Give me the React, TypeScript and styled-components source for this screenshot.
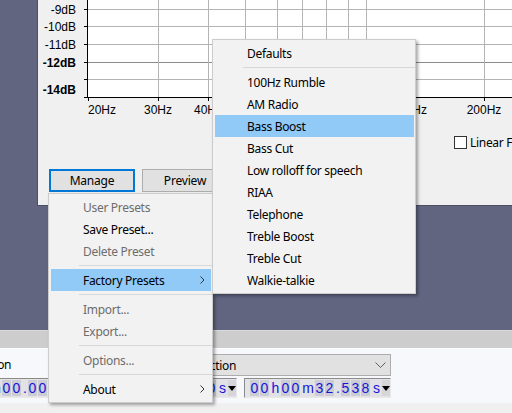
import React from "react";
import styled, { createGlobalStyle } from "styled-components";

const Global = createGlobalStyle`
  html, body { margin: 0; padding: 0; overflow: hidden; background: #626580; }
  #root { width: 512px; height: 413px; }
`;

const UI = `"Noto Sans", "Open Sans", sans-serif`;
const ARIAL = `"Liberation Sans", Arial, sans-serif`;

const Page = styled.div`
  position: relative;
  width: 512px;
  height: 413px;
  overflow: hidden;
  display: flex;
  flex-direction: column;
  background: #626580;
`;

const Desk = styled.div`
  height: 330px;
  flex: none;
  display: flex;
  align-items: flex-start;
  padding-left: 37px;
`;

const Dialog = styled.div`
  width: 474px;
  height: 205px;
  background: #f0f0f0;
  border-left: 1px solid #4d5064;
  border-bottom: 1px solid #4d5064;
  display: flex;
  flex-direction: column;
  overflow: hidden;
`;

const ChartSvg = styled.svg`
  display: block;
  flex: none;
`;

const OptionRow = styled.div`
  margin-top: 14px;
  padding-left: 416px;
  height: 13px;
  display: flex;
  align-items: center;
  gap: 3px;
  white-space: nowrap;
  font-family: ${UI};
  font-size: 12px;
  letter-spacing: -0.3px;
  color: #000;
`;

const CheckBox = styled.span`
  width: 11px;
  height: 11px;
  flex: none;
  border: 1px solid #333;
  background: #fff;
`;

const ButtonRow = styled.div`
  margin-top: 20px;
  padding-left: 11px;
  display: flex;
  gap: 7px;
`;

const Button = styled.div<{ $focused?: boolean }>`
  width: 86px;
  height: 23px;
  box-sizing: border-box;
  flex: none;
  display: flex;
  align-items: center;
  justify-content: center;
  background: #e1e1e1;
  border: ${(p) => (p.$focused ? "2px solid #0078d7" : "1px solid #adadad")};
  font-family: ${UI};
  font-size: 12px;
  letter-spacing: -0.2px;
  color: #000;
`;

const Dock = styled.div`
  flex: 1;
  display: flex;
  flex-direction: column;
  background: #f0f0f0;
`;

const DockGrip = styled.div`
  height: 17px;
  border-top: 1px solid #dadada;
  border-bottom: 1px solid #ffffff;
  background: #cdcdcd;
`;

const ToolPanel = styled.div`
  height: 44px;
  padding: 5px 0 5px 0;
  margin-left: -69px;
  background: #f7f8fb;
  display: flex;
  gap: 12px;
`;

const ToolGroup = styled.div`
  display: flex;
  flex-direction: column;
  gap: 2px;
`;

const ToolLabel = styled.div`
  height: 22px;
  line-height: 22px;
  padding-left: 3px;
  font-family: ${UI};
  font-size: 12px;
  letter-spacing: -0.3px;
  color: #000;
  white-space: nowrap;
`;

const Combo = styled.div`
  width: 301px;
  height: 22px;
  box-sizing: border-box;
  border: 1px solid #adadad;
  background: #e1e1e1;
  display: flex;
  align-items: center;
  justify-content: space-between;
  padding: 0 4px 0 8px;
  font-family: ${UI};
  font-size: 12px;
  letter-spacing: -0.3px;
  color: #000;
  white-space: nowrap;
`;

const TimeRow = styled.div`
  display: flex;
  gap: 7px;
`;

const TimeBox = styled.div`
  width: 147px;
  height: 20px;
  box-sizing: border-box;
  border: 1px solid;
  border-color: #8a8a8a #e8e8e8 #e8e8e8 #8a8a8a;
  background: #e4e4e6;
  display: flex;
  align-items: stretch;
  padding: 1px 0 1px 5px;
  font-family: ${ARIAL};
  font-size: 14px;
  color: #1515d8;
`;

const Digit = styled.span<{ $w: number; $sep?: boolean }>`
  width: ${(p) => p.$w}px;
  flex: none;
  display: flex;
  align-items: center;
  justify-content: center;
  overflow: hidden;
  background: ${(p) => (p.$sep ? "#e2e2e6" : "#cbccd4")};
  margin-right: ${(p) => (p.$sep ? 0 : 1)}px;
`;

const DropArrow = styled.span`
  width: 8px;
  flex: none;
  display: flex;
  align-items: center;
  justify-content: center;
  background: #d6d6d8;
  margin-left: auto;
`;

const Menu = styled.div<{ $x: number; $y: number; $w: number; $z: number }>`
  position: absolute;
  left: ${(p) => p.$x}px;
  top: ${(p) => p.$y}px;
  width: ${(p) => p.$w}px;
  box-sizing: border-box;
  z-index: ${(p) => p.$z};
  background: #f2f2f2;
  border: 1px solid #cccccc;
  padding: 2px 0 2px 0;
  box-shadow: 2px 2px 3px rgba(0, 0, 0, 0.35);
  font-family: ${UI};
  font-size: 12px;
  letter-spacing: -0.3px;
`;

const Item = styled.div<{ $disabled?: boolean; $active?: boolean }>`
  height: 22px;
  margin: 0 1px 0 2px;
  padding: 0 6px 0 32px;
  display: flex;
  align-items: center;
  justify-content: space-between;
  white-space: nowrap;
  background: ${(p) => (p.$active ? "#91c9f7" : "transparent")};
  color: ${(p) => (p.$disabled ? "#6d6d6d" : "#000")};
`;

const Separator = styled.div`
  height: 7px;
  display: flex;
  align-items: center;
  padding-left: 30px;
  &::after {
    content: "";
    flex: 1;
    height: 1px;
    background: #d7d7d7;
  }
`;

const SubArrow = () => (
  <svg width="5" height="8" viewBox="0 0 5 8">
    <polyline points="0.5,0.5 4,4 0.5,7.5" fill="none" stroke="#333" strokeWidth="1" />
  </svg>
);

const ChevronDown = () => (
  <svg width="11" height="7" viewBox="0 0 11 7">
    <polyline points="0.5,0.5 5.5,5.5 10.5,0.5" fill="none" stroke="#606060" strokeWidth="1" />
  </svg>
);

const Tri = () => (
  <svg width="8" height="5" viewBox="0 0 8 5">
    <polygon points="0,0 8,0 4,5" fill="#000" />
  </svg>
);

const sepWidths: Record<string, number> = { h: 11, m: 14, ".": 6, s: 11 };

const TimeControl = ({ value }: { value: string }) => (
  <TimeBox>
    {value.split("").map((c, i) =>
      /\d/.test(c) ? (
        <Digit key={i} $w={9}>
          {c}
        </Digit>
      ) : (
        <Digit key={i} $w={sepWidths[c] ?? 8} $sep>
          {c}
        </Digit>
      )
    )}
    <DropArrow>
      <Tri />
    </DropArrow>
  </TimeBox>
);

const hLines = [
  { y: 9, c: "#b4b4b4" },
  { y: 26, c: "#b4b4b4" },
  { y: 44, c: "#b4b4b4" },
  { y: 62, c: "#8c8c8c" },
  { y: 79, c: "#b4b4b4" },
];
const vLines = [158, 208, 245, 277, 302, 326, 348, 366, 484];
const majorTicks = [88, 158, 208, 366, 484];

const Chart = () => (
  <ChartSvg width={474} height={122} viewBox="38 0 474 122">
    <rect x={88} y={0} width={424} height={97} fill="#ffffff" />
    {hLines.map((l) => (
      <line key={l.y} x1={88} x2={512} y1={l.y + 0.5} y2={l.y + 0.5} stroke={l.c} strokeWidth={1} />
    ))}
    {vLines.map((x) => (
      <line key={x} x1={x + 0.5} x2={x + 0.5} y1={0} y2={97} stroke="#b4b4b4" strokeWidth={1} />
    ))}
    <line x1={87.5} x2={87.5} y1={0} y2={98} stroke="#000" strokeWidth={1} />
    <line x1={87} x2={512} y1={97.5} y2={97.5} stroke="#000" strokeWidth={1} />
    {[9, 26, 44, 62, 79, 97].map((y) => (
      <line key={y} x1={84} x2={88} y1={y + 0.5} y2={y + 0.5} stroke="#000" strokeWidth={1} />
    ))}
    {vLines.concat([88]).map((x) => (
      <line
        key={"t" + x}
        x1={x + 0.5}
        x2={x + 0.5}
        y1={97}
        y2={majorTicks.includes(x) ? 101 : 99}
        stroke="#000"
        strokeWidth={1}
      />
    ))}
    <g fontFamily={ARIAL} fontSize={12} fill="#000" textAnchor="end">
      <text x={76} y={14}>-9dB</text>
      <text x={76} y={31}>-10dB</text>
      <text x={76} y={49}>-11dB</text>
      <text x={76} y={67} fontWeight="bold">-12dB</text>
      <text x={76} y={94} fontWeight="bold">-14dB</text>
    </g>
    <g fontFamily={ARIAL} fontSize={12} fill="#000" textAnchor="middle">
      <text x={88} y={114} textAnchor="start">20Hz</text>
      <text x={158} y={114}>30Hz</text>
      <text x={208} y={114}>40Hz</text>
      <text x={427} y={114} textAnchor="end">100Hz</text>
      <text x={484} y={114}>200Hz</text>
    </g>
  </ChartSvg>
);

export default function App() {
  return (
    <Page>
      <Global />
      <Desk>
        <Dialog>
          <Chart />
          <OptionRow>
            <CheckBox />
            <span>Linear Frequency Scale</span>
          </OptionRow>
          <ButtonRow>
            <Button $focused>Manage</Button>
            <Button>Preview</Button>
          </ButtonRow>
        </Dialog>
      </Desk>
      <Dock>
        <DockGrip />
        <ToolPanel>
          <ToolGroup>
            <ToolLabel>Audio Position</ToolLabel>
            <TimeControl value="00h00m00.000s" />
          </ToolGroup>
          <ToolGroup>
            <Combo>
              <span>Start and End of Selection</span>
              <ChevronDown />
            </Combo>
            <TimeRow>
              <TimeControl value="00h00m00.000s" />
              <TimeControl value="00h00m32.538s" />
            </TimeRow>
          </ToolGroup>
        </ToolPanel>
      </Dock>

      <Menu $x={48} $y={193} $w={165} $z={2}>
        <Item $disabled>User Presets</Item>
        <Item>Save Preset...</Item>
        <Item $disabled>Delete Preset</Item>
        <Separator />
        <Item $active>
          <span>Factory Presets</span>
          <SubArrow />
        </Item>
        <Separator />
        <Item $disabled>Import...</Item>
        <Item $disabled>Export...</Item>
        <Separator />
        <Item $disabled>Options...</Item>
        <Separator />
        <Item>
          <span>About</span>
          <SubArrow />
        </Item>
      </Menu>

      <Menu $x={212} $y={39} $w={204} $z={3}>
        <Item>Defaults</Item>
        <Separator />
        <Item>100Hz Rumble</Item>
        <Item>AM Radio</Item>
        <Item $active>Bass Boost</Item>
        <Item>Bass Cut</Item>
        <Item>Low rolloff for speech</Item>
        <Item>RIAA</Item>
        <Item>Telephone</Item>
        <Item>Treble Boost</Item>
        <Item>Treble Cut</Item>
        <Item>Walkie-talkie</Item>
      </Menu>
    </Page>
  );
}
